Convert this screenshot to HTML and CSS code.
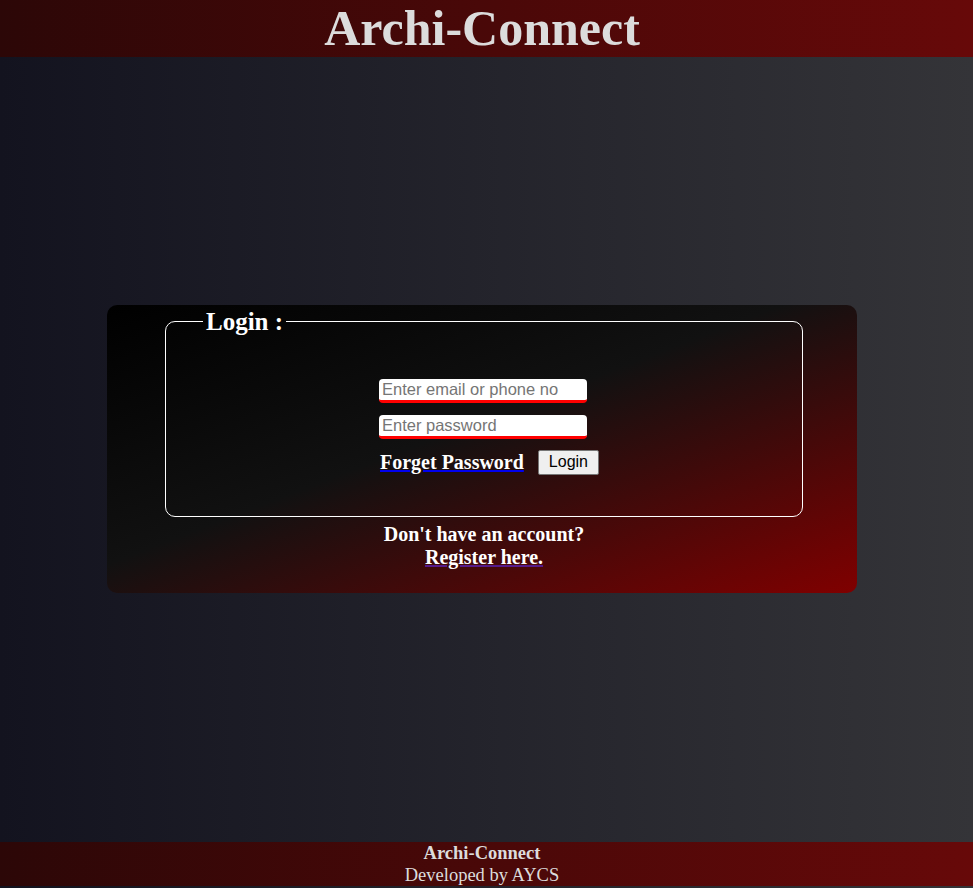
FILE: index.html
```html
<!DOCTYPE html>
<html lang="en">
<head>
<meta charset="utf-8">
<title>Archi-Connect</title>
<link rel="stylesheet" href="styles.css">
</head>
<body>
<div class="page">
  <header class="site-header">
    <h1 class="site-title">Archi-Connect</h1>
  </header>
  <main class="main">
    <div class="card">
      <fieldset class="login-box">
        <legend class="login-legend">Login :</legend>
        <form class="login-form">
          <input class="field" type="text" placeholder="Enter email or phone no">
          <input class="field" type="password" placeholder="Enter password">
          <div class="actions">
            <a class="forget" href="#">Forget Password</a>
            <button class="login-btn" type="button">Login</button>
          </div>
        </form>
      </fieldset>
      <p class="register">Don't have an account?<br><a class="register-link" href="#">Register here.</a></p>
    </div>
  </main>
  <footer class="site-footer">
    <div class="footer-title">Archi-Connect</div>
    <div class="footer-sub">Developed by AYCS</div>
  </footer>
</div>
</body>
</html>
```

FILE: styles.css
```css
html, body {
  margin: 0;
  padding: 0;
  height: 100%;
}
body {
  font-family: "Liberation Serif", "Times New Roman", serif;
  background: linear-gradient(to right, #13131f, #343438);
  overflow: hidden;
}
.page {
  display: flex;
  flex-direction: column;
  height: 886px;
}
.site-header {
  background: linear-gradient(to right, #2c0707, #670909);
  height: 57px;
  padding-right: 9px;
  text-align: center;
}
.site-title {
  margin: 0;
  font-size: 50px;
  line-height: 57px;
  font-weight: bold;
  color: #dcdcdc;
}
.main {
  flex: 1;
  display: flex;
  align-items: center;
  justify-content: center;
  padding-right: 9px;
}
.card {
  width: 750px;
  height: 288px;
  box-sizing: border-box;
  border-radius: 10px;
  background: linear-gradient(to bottom right, #000000 0%, #111111 45%, #800000 100%);
  padding-top: 3px;
  margin-top: -2px;
  color: #fff;
}
.login-box {
  width: 638px;
  box-sizing: border-box;
  margin: 0 0 0 58px;
  border: 1px solid #fff;
  border-radius: 10px;
  padding: 43px 0 41px;
}
.login-legend {
  margin-left: 37px;
  padding: 0 3px;
  font-size: 25px;
  font-weight: bold;
  line-height: 28px;
  color: #fff;
}
.login-form {
  width: 208px;
  margin: 0 0 0 213px;
  display: flex;
  flex-direction: column;
  align-items: flex-start;
}
.field {
  width: 208px;
  height: 24px;
  box-sizing: border-box;
  border: none;
  border-bottom: 3px solid #ff0000;
  border-radius: 4px;
  background: #fff;
  padding: 0 3px;
  margin: 0 0 12px;
  font-family: "Liberation Sans", Arial, sans-serif;
  font-size: 16.5px;
  color: #000;
  outline: none;
}
.field::placeholder {
  color: #757575;
}
.actions {
  display: flex;
  align-items: center;
  white-space: nowrap;
  margin-top: -1px;
  padding-left: 1px;
}
.forget {
  color: #fff;
  font-size: 20px;
  font-weight: bold;
  text-decoration: underline;
  text-decoration-color: #0000ee;
  text-decoration-thickness: 2px;
}
.login-btn {
  margin-left: 14px;
  height: 25px;
  padding: 0 10px;
  font-family: "Liberation Sans", Arial, sans-serif;
  font-size: 16px;
  color: #000;
  background: #efefef;
  border: 1px solid #767676;
  border-radius: 2px;
}
.register {
  margin: 6px 0 0;
  padding-left: 4px;
  text-align: center;
  font-size: 20px;
  font-weight: bold;
  line-height: 23px;
  color: #fff;
}
.register-link {
  color: #fff;
  text-decoration: underline;
  text-decoration-color: #551a8b;
  text-decoration-thickness: 2px;
}
.site-footer {
  background: linear-gradient(to right, #2c0707, #670909);
  height: 44px;
  padding-right: 9px;
  text-align: center;
  color: #dcdcdc;
  font-size: 18.5px;
  line-height: 22px;
}
.footer-title {
  font-weight: bold;
}
```
